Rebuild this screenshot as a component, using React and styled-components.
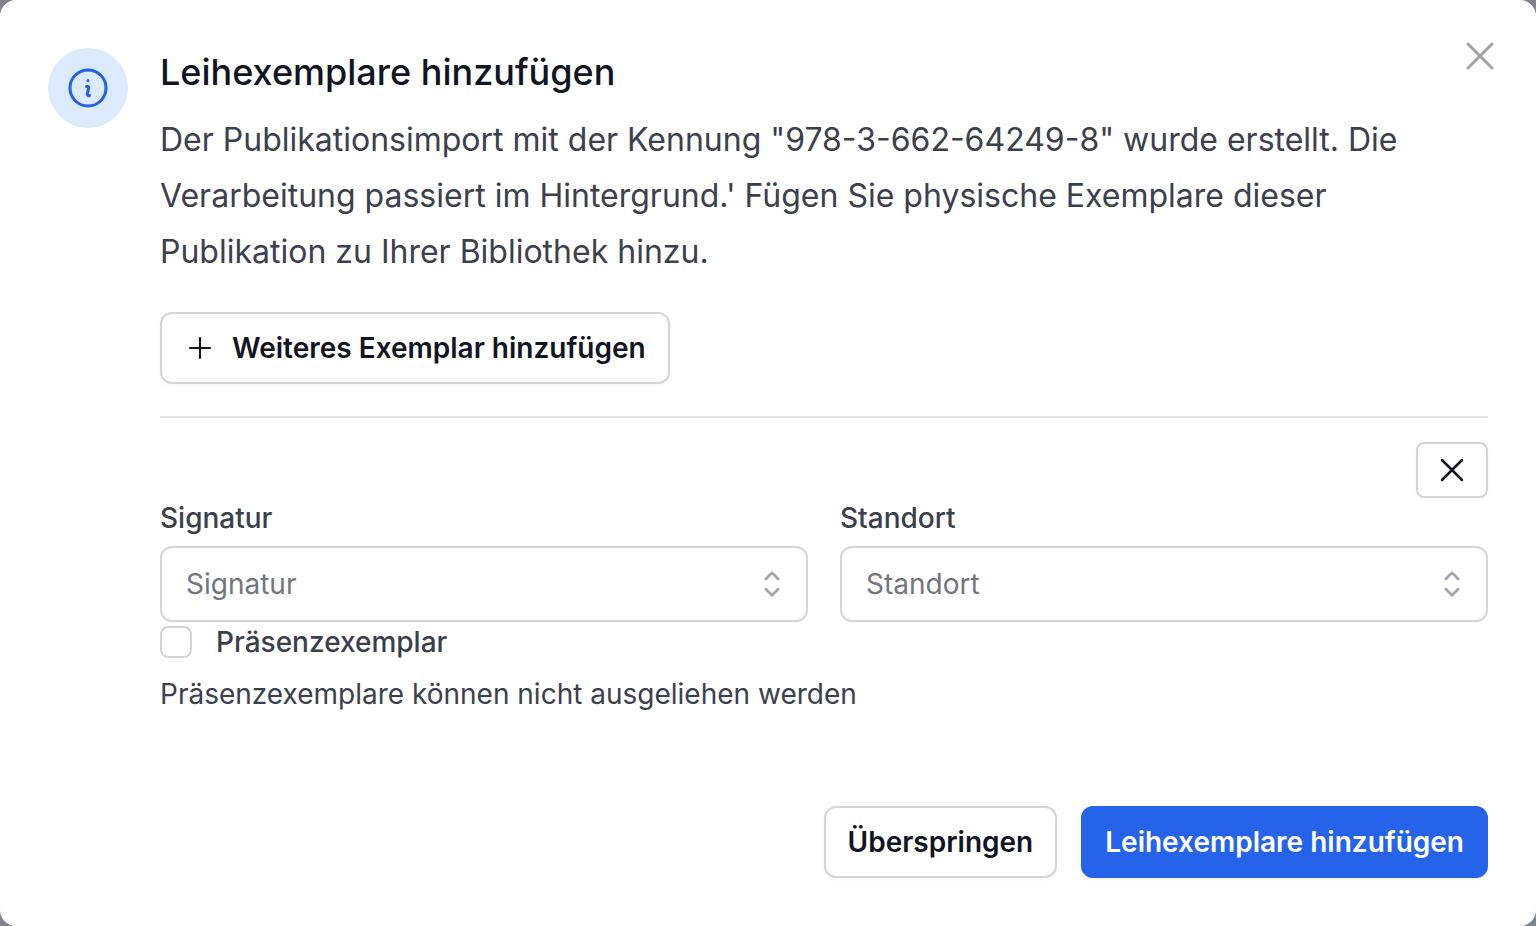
import React, { useState } from "react";
import styled, { createGlobalStyle } from "styled-components";

const GlobalStyle = createGlobalStyle`
  *, *::before, *::after {
    box-sizing: border-box;
  }
  body {
    margin: 0;
    background: #808489;
    font-family: Inter, "Liberation Sans", sans-serif;
    color: #111422;
  }
`;

const Dialog = styled.section`
  position: relative;
  display: flex;
  align-items: flex-start;
  gap: 32px;
  padding: 48px;
  border-radius: 16px;
  background: #fff;
`;

const IconBadge = styled.div`
  display: flex;
  align-items: center;
  justify-content: center;
  flex-shrink: 0;
  width: 80px;
  height: 80px;
  border-radius: 50%;
  background: #dceafd;
  color: #2860e4;
`;

const Svg = styled.svg`
  display: block;
  flex-shrink: 0;
  width: ${(props) => props.$size}px;
  height: ${(props) => props.$size}px;
  fill: none;
  stroke: currentColor;
  stroke-width: 1.5;
  stroke-linecap: round;
  stroke-linejoin: round;
`;

const CloseButton = styled.button`
  position: absolute;
  top: 32px;
  right: 32px;
  padding: 0;
  border: 0;
  background: none;
  color: #9fa2a8;
  cursor: pointer;
  &:hover {
    color: #6b7280;
  }
`;

const Content = styled.div`
  flex: 1;
  min-width: 0;
`;

const Title = styled.h3`
  margin: 0;
  font-size: 36px;
  font-weight: 500;
  line-height: 48px;
`;

const Description = styled.p`
  margin: 16px 0 32px;
  font-size: 32px;
  line-height: 56px;
  color: #3c404c;
`;

const Button = styled.button`
  display: inline-flex;
  align-items: center;
  gap: 16px;
  padding: 14px 22px;
  border: 2px solid ${(props) => (props.$primary ? "#2563eb" : "#d3d5d7")};
  border-radius: 12px;
  background: ${(props) => (props.$primary ? "#2563eb" : "#fff")};
  color: ${(props) => (props.$primary ? "#fff" : "#111422")};
  box-shadow: 0 2px 4px rgba(0, 0, 0, 0.04);
  font-family: inherit;
  font-size: 28px;
  font-weight: 600;
  line-height: 40px;
  cursor: pointer;
`;

const RemoveButton = styled(Button)`
  padding: 6px 14px;
  border-radius: 8px;
`;

const Divider = styled.hr`
  margin: 32px 0 24px;
  border: 0;
  border-top: 2px solid #e4e5e7;
`;

const RemoveRow = styled.div`
  display: flex;
  justify-content: flex-end;
`;

const Fields = styled.div`
  display: grid;
  grid-template-columns: 1fr 1fr;
  gap: 32px;
`;

const Label = styled.label`
  display: block;
  font-size: 28px;
  font-weight: 500;
  line-height: 40px;
  color: #3a3f4b;
`;

const InputBox = styled.div`
  display: flex;
  align-items: center;
  margin-top: 8px;
  padding-right: 14px;
  border: 2px solid #d3d5d7;
  border-radius: 12px;
  background: #fff;
  &:focus-within {
    border-color: #2563eb;
  }
`;

const Input = styled.input`
  flex: 1;
  min-width: 0;
  height: 72px;
  padding: 0 24px;
  border: 0;
  outline: 0;
  background: none;
  color: #111422;
  font-family: inherit;
  font-size: 28px;
  &::placeholder {
    color: #72757e;
    opacity: 1;
  }
`;

const ToggleButton = styled.button`
  padding: 0;
  border: 0;
  background: none;
  color: #9fa2ab;
  cursor: pointer;
`;

const CheckRow = styled.div`
  display: flex;
  align-items: center;
  gap: 24px;
`;

const Checkbox = styled.input`
  appearance: none;
  width: 32px;
  height: 32px;
  margin: 0;
  border: 2px solid #d3d5d7;
  border-radius: 8px;
  background: #fff;
  &:checked {
    border-color: #2563eb;
    background: #2563eb;
  }
`;

const Hint = styled.p`
  margin: 12px 0 0;
  font-size: 28px;
  line-height: 40px;
  color: #3c404c;
`;

const Actions = styled.div`
  display: flex;
  justify-content: flex-end;
  gap: 24px;
  margin-top: 92px;
`;

const icons = {
  info: "M11.25 11.25l.041-.02a.75.75 0 011.063.852l-.708 2.836a.75.75 0 001.063.853l.041-.021M21 12a9 9 0 11-18 0 9 9 0 0118 0zm-9-3.75h.008v.008H12V8.25z",
  close: "M6 18L18 6M6 6l12 12",
  plus: "M12 4.5v15m7.5-7.5h-15",
  upDown: "M8.25 15L12 18.75 15.75 15m-7.5-6L12 5.25 15.75 9",
};

const Icon = ({ name, size }) => (
  <Svg $size={size} viewBox="0 0 24 24" aria-hidden="true">
    <path d={icons[name]} />
  </Svg>
);

const Combobox = ({ id, label }) => {
  const [value, setValue] = useState("");

  return (
    <div>
      <Label htmlFor={id}>{label}</Label>
      <InputBox>
        <Input
          id={id}
          type="text"
          role="combobox"
          aria-expanded="false"
          placeholder={label}
          value={value}
          onChange={(e) => setValue(e.target.value)}
        />
        <ToggleButton type="button" aria-label={`${label} auswählen`}>
          <Icon name="upDown" size={40} />
        </ToggleButton>
      </InputBox>
    </div>
  );
};

const App = () => {
  const [presence, setPresence] = useState(false);

  return (
    <>
      <GlobalStyle />
      <Dialog role="dialog" aria-labelledby="dialog-title">
        <IconBadge>
          <Icon name="info" size={48} />
        </IconBadge>
        <Content>
          <Title id="dialog-title">Leihexemplare hinzufügen</Title>
          <Description>
            Der Publikationsimport mit der Kennung "978-3-662-64249-8" wurde
            erstellt. Die Verarbeitung passiert im Hintergrund.' Fügen Sie
            physische Exemplare dieser Publikation zu Ihrer Bibliothek hinzu.
          </Description>
          <Button type="button">
            <Icon name="plus" size={32} />
            Weiteres Exemplar hinzufügen
          </Button>
          <Divider />
          <RemoveRow>
            <RemoveButton type="button" aria-label="Exemplar entfernen">
              <Icon name="close" size={40} />
            </RemoveButton>
          </RemoveRow>
          <Fields>
            <Combobox id="signatur" label="Signatur" />
            <Combobox id="standort" label="Standort" />
          </Fields>
          <CheckRow>
            <Checkbox
              id="presence"
              type="checkbox"
              checked={presence}
              onChange={(e) => setPresence(e.target.checked)}
            />
            <Label htmlFor="presence">Präsenzexemplar</Label>
          </CheckRow>
          <Hint>Präsenzexemplare können nicht ausgeliehen werden</Hint>
          <Actions>
            <Button type="button">Überspringen</Button>
            <Button type="button" $primary>
              Leihexemplare hinzufügen
            </Button>
          </Actions>
        </Content>
        <CloseButton type="button" aria-label="Schließen">
          <Icon name="close" size={48} />
        </CloseButton>
      </Dialog>
    </>
  );
};

export default App;
